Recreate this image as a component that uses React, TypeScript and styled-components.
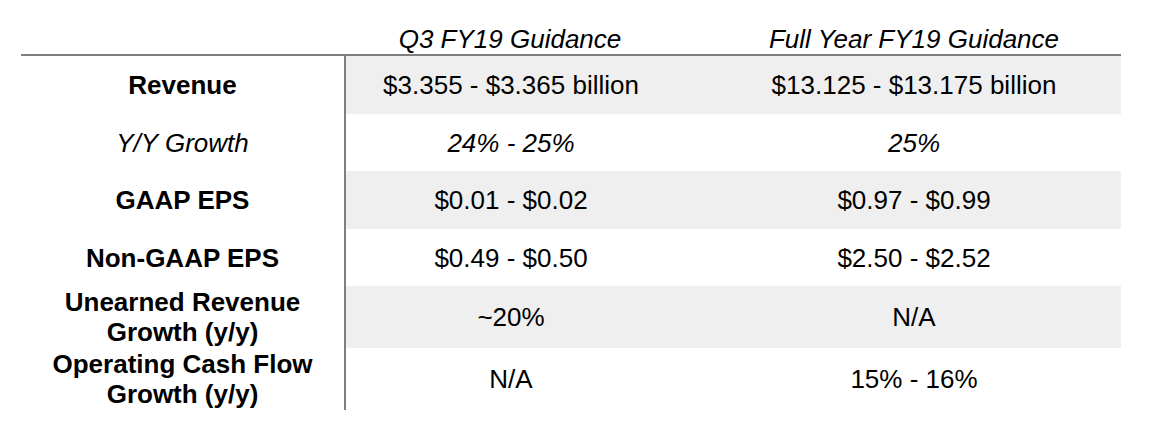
import React from "react";
import styled, { createGlobalStyle } from "styled-components";

/* colours taken from the slide */
const C = {
  rule: "#7f7f7f",
  shade: "#efefef",
  text: "#000000",
};

const Global = createGlobalStyle`
  html, body { margin: 0; padding: 0; background: #fff; }
  body { font-family: "Liberation Sans", Arial, "Helvetica Neue", sans-serif; color: ${C.text}; }
`;

const Page = styled.div`
  width: 1172px;
  height: 446px;
  padding: 24px 0 0 21px;
  box-sizing: border-box;
`;

const Table = styled.div`
  width: 1100px;
  display: flex;
  flex-direction: column;
`;

/* one row: label | Q3 | full year */
const Row = styled.div<{ $h: number }>`
  display: grid;
  grid-template-columns: 323px 332px 445px;
  height: ${(p) => p.$h}px;
`;

const HeadRow = styled(Row)`
  border-bottom: 2px solid ${C.rule};
`;

const Cell = styled.div<{ $shade?: boolean; $divider?: boolean; $shift?: boolean }>`
  display: flex;
  align-items: center;
  justify-content: center;
  text-align: center;
  font-size: 26px;
  line-height: 30px;
  background: ${(p) => (p.$shade ? C.shade : "transparent")};
  border-left: ${(p) => (p.$divider ? `2px solid ${C.rule}` : "none")};
  padding-left: ${(p) => (p.$shift ? "31px" : "0")};
`;

const HeadCell = styled(Cell)`
  font-style: italic;
  align-items: flex-end;
`;

const Label = styled(Cell)<{ $italic?: boolean }>`
  font-weight: ${(p) => (p.$italic ? 400 : 700)};
  font-style: ${(p) => (p.$italic ? "italic" : "normal")};
`;

const Value = styled(Cell)<{ $italic?: boolean }>`
  font-style: ${(p) => (p.$italic ? "italic" : "normal")};
`;

interface Line {
  label: React.ReactNode;
  q3: string;
  fy: string;
  h: number;
  italic?: boolean;
}

const lines: Line[] = [
  { label: "Revenue", q3: "$3.355 - $3.365 billion", fy: "$13.125 - $13.175 billion", h: 58 },
  { label: "Y/Y Growth", q3: "24% - 25%", fy: "25%", h: 57, italic: true },
  { label: "GAAP EPS", q3: "$0.01 - $0.02", fy: "$0.97 - $0.99", h: 58 },
  { label: "Non-GAAP EPS", q3: "$0.49 - $0.50", fy: "$2.50 - $2.52", h: 57 },
  {
    label: (
      <>
        Unearned Revenue
        <br />
        Growth (y/y)
      </>
    ),
    q3: "~20%",
    fy: "N/A",
    h: 62,
  },
  {
    label: (
      <>
        Operating Cash Flow
        <br />
        Growth (y/y)
      </>
    ),
    q3: "N/A",
    fy: "15% - 16%",
    h: 62,
  },
];

export default function App() {
  return (
    <>
      <Global />
      <Page>
        <Table>
          <HeadRow $h={30}>
            <HeadCell />
            <HeadCell>Q3 FY19 Guidance</HeadCell>
            <HeadCell $shift>Full Year FY19 Guidance</HeadCell>
          </HeadRow>
          {lines.map((l, i) => {
            const shade = i % 2 === 0;
            return (
              <Row key={i} $h={l.h}>
                <Label $italic={l.italic}>{l.label}</Label>
                <Value $divider $shade={shade} $italic={l.italic}>
                  {l.q3}
                </Value>
                <Value $shift $shade={shade} $italic={l.italic}>
                  {l.fy}
                </Value>
              </Row>
            );
          })}
        </Table>
      </Page>
    </>
  );
}
